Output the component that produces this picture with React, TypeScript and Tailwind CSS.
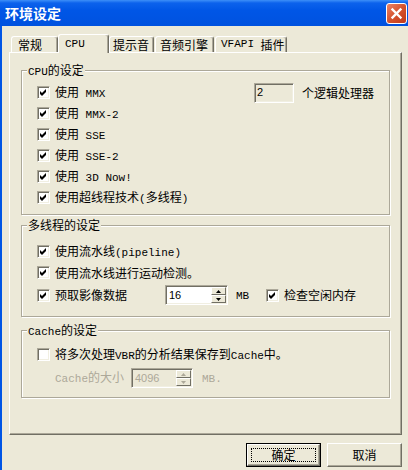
import React from "react";

function T({ s }: { s: string }) {
  const parts = s.split(/([\x00-\x7F]+)/).filter(Boolean);
  return (
    <>
      {parts.map((p, i) =>
        /^[\x00-\x7F]+$/.test(p) ? (
          <span key={i} className="whitespace-pre font-['Liberation_Mono',monospace] text-[11px]">
            {p}
          </span>
        ) : (
          <span key={i}>{p}</span>
        )
      )}
    </>
  );
}

function Box({ checked }: { checked: boolean }) {
  return (
    <span className="w-[13px] h-[13px] shrink-0 flex items-center justify-center bg-white border border-t-[#ACA899] border-l-[#ACA899] border-b-white border-r-white shadow-[inset_1px_1px_0_#716F64,inset_-1px_-1px_0_#F1EFE2]">
      {checked && (
        <svg width="9" height="9" viewBox="0 0 9 9" className="block">
          <polygon points="1,3 3,5 7,1 7,4 3,8 1,6" fill="#000" />
        </svg>
      )}
    </span>
  );
}

function Check({ label, checked = true }: { label: string; checked?: boolean }) {
  return (
    <div className="flex items-center gap-[5px]">
      <Box checked={checked} />
      <span className="whitespace-nowrap leading-[16px]">
        <T s={label} />
      </span>
    </div>
  );
}

function Group({ title, className, children }: { title: string; className: string; children: React.ReactNode }) {
  return (
    <div className={`relative flex flex-col pl-[15px] border border-[#ACA899] shadow-[1px_1px_0_#fff,inset_1px_1px_0_#fff] ${className}`}>
      <span className="absolute -top-[9px] left-[5px] px-[1px] bg-[#ECE9D8] leading-[16px] whitespace-nowrap">
        <T s={title} />
      </span>
      {children}
    </div>
  );
}

function ArrowBtn({ up, disabled }: { up?: boolean; disabled?: boolean }) {
  return (
    <div className="flex-1 flex items-center justify-center bg-[#ECE9D8] border border-t-white border-l-white border-b-[#716F64] border-r-[#716F64]">
      <svg width="5" height="3" viewBox="0 0 5 3" className="block">
        <polygon points={up ? "2.5,0 5,3 0,3" : "0,0 5,0 2.5,3"} fill={disabled ? "#ACA899" : "#000"} />
      </svg>
    </div>
  );
}

function Spin({ value, w, disabled = false }: { value: string; w: string; disabled?: boolean }) {
  return (
    <div
      className={`${w} h-[20px] shrink-0 flex p-[1px] border border-t-[#ACA899] border-l-[#ACA899] border-b-white border-r-white shadow-[inset_1px_1px_0_#716F64,inset_-1px_-1px_0_#F1EFE2] ${
        disabled ? "bg-[#ECE9D8] text-[#ACA899]" : "bg-white text-black"
      }`}
    >
      <div className="flex-1 flex items-center pl-[2px] font-['Liberation_Sans',sans-serif] text-[11px]">{value}</div>
      <div className="w-[15px] flex flex-col">
        <ArrowBtn up disabled={disabled} />
        <ArrowBtn disabled={disabled} />
      </div>
    </div>
  );
}

function Tab({ label, w, selected }: { label: string; w: string; selected?: boolean }) {
  return (
    <div
      className={`${w} flex items-center whitespace-nowrap bg-[#ECE9D8] border-t border-l border-white border-r border-r-[#716F64] rounded-t-[3px] shadow-[inset_-1px_0_0_#ACA899] ${
        selected ? "h-[19px] relative z-10" : "h-[16px] mb-[1px]"
      }`}
    >
      <T s={label} />
    </div>
  );
}

export default function App() {
  return (
    <div className="w-[408px] h-[470px] overflow-hidden bg-[#ECE9D8] flex flex-col text-[12px] text-black font-['Noto_Sans_CJK_SC',sans-serif]">
      <div className="h-[26px] shrink-0 flex items-center pl-[5px] pr-[1px] bg-[linear-gradient(to_bottom,#3D8FF8_0px,#0C62EC_3px,#0056E6_40%,#0052DF_100%)]">
        <span className="flex-1 text-white font-bold text-[14px] leading-none">环境设定</span>
        <div className="w-[21px] h-[21px] rounded-[3px] border border-white flex items-center justify-center bg-[linear-gradient(135deg,#EB8468,#D5532E_50%,#C0391A)]">
          <svg width="13" height="13" viewBox="0 0 13 13" className="block">
            <path d="M2.5 2.5 L10.5 10.5 M10.5 2.5 L2.5 10.5" stroke="#fff" strokeWidth="2.4" strokeLinecap="square" />
          </svg>
        </div>
      </div>

      <div className="flex-1 flex flex-col border-l-2 border-[#0055E5] pl-[7px] pr-[6px] pt-[8px]">
        <div className="relative z-10 flex items-end h-[19px] pl-[2px]">
          <Tab label="常规" w="w-[47px] pl-[6px]" />
          <Tab label="CPU" w="w-[51px] pl-[6px]" selected />
          <Tab label="提示音" w="w-[45px] pl-[3px]" />
          <Tab label="音频引擎" w="w-[59px] pl-[4px] ml-[1px]" />
          <Tab label="VFAPI 插件" w="w-[72px] pl-[5px] ml-[1px]" />
        </div>

        <div className="-mt-[1px] h-[383px] shrink-0 flex flex-col px-[11px] pt-[17px] border-t border-l border-t-white border-l-white border-r border-b border-r-[#716F64] border-b-[#716F64] shadow-[inset_-1px_-1px_0_#ACA899]">
          <Group title="CPU的设定" className="h-[145px] pt-[11px]">
            <div className="h-[21px] flex items-center">
              <div className="w-[217px]">
                <Check label="使用 MMX" />
              </div>
              <div className="w-[40px] h-[20px] flex items-center pl-[2px] pr-[1px] border border-t-[#ACA899] border-l-[#ACA899] border-b-white border-r-white shadow-[inset_1px_1px_0_#716F64,inset_-1px_-1px_0_#F1EFE2] font-['Liberation_Sans',sans-serif] text-[11px]">
                2
              </div>
              <span className="ml-[8px] whitespace-nowrap">个逻辑处理器</span>
            </div>
            <div className="h-[21px] flex items-center">
              <Check label="使用 MMX-2" />
            </div>
            <div className="h-[21px] flex items-center">
              <Check label="使用 SSE" />
            </div>
            <div className="h-[21px] flex items-center">
              <Check label="使用 SSE-2" />
            </div>
            <div className="h-[21px] flex items-center">
              <Check label="使用 3D Now!" />
            </div>
            <div className="h-[21px] flex items-center">
              <Check label="使用超线程技术(多线程)" />
            </div>
          </Group>

          <Group title="多线程的设定" className="mt-[10px] h-[92px] pt-[15px]">
            <div className="h-[21px] flex items-center">
              <Check label="使用流水线(pipeline)" />
            </div>
            <div className="h-[21px] flex items-center">
              <Check label="使用流水线进行运动检测。" />
            </div>
            <div className="h-[24px] flex items-center">
              <div className="w-[128px]">
                <Check label="预取影像数据" />
              </div>
              <Spin value="16" w="w-[63px]" />
              <span className="ml-[8px] w-[30px]">
                <T s="MB" />
              </span>
              <Check label="检查空闲内存" />
            </div>
          </Group>

          <Group title="Cache的设定" className="mt-[13px] h-[68px] pt-[13px]">
            <div className="h-[21px] flex items-center">
              <Check label="将多次处理VBR的分析结果保存到Cache中。" checked={false} />
            </div>
            <div className="mt-[2px] h-[22px] flex items-center text-[#ACA899]">
              <span className="ml-[18px] w-[76px] whitespace-nowrap">
                <T s="Cache的大小" />
              </span>
              <Spin value="4096" w="w-[62px]" disabled />
              <span className="ml-[9px]">
                <T s="MB." />
              </span>
            </div>
          </Group>
        </div>

        <div className="mt-[8px] h-[24px] flex justify-end gap-[6px]">
          <div className="w-[75px] h-[24px] border border-black flex">
            <div className="flex-1 flex p-[3px] border border-t-white border-l-white border-b-[#716F64] border-r-[#716F64] shadow-[inset_-1px_-1px_0_#ACA899]">
              <div className="flex-1 flex items-center justify-center border border-dotted border-black">确定</div>
            </div>
          </div>
          <div className="w-[75px] h-[24px] flex items-center justify-center border border-t-white border-l-white border-b-[#716F64] border-r-[#716F64] shadow-[inset_-1px_-1px_0_#ACA899]">
            取消
          </div>
        </div>
      </div>
    </div>
  );
}
